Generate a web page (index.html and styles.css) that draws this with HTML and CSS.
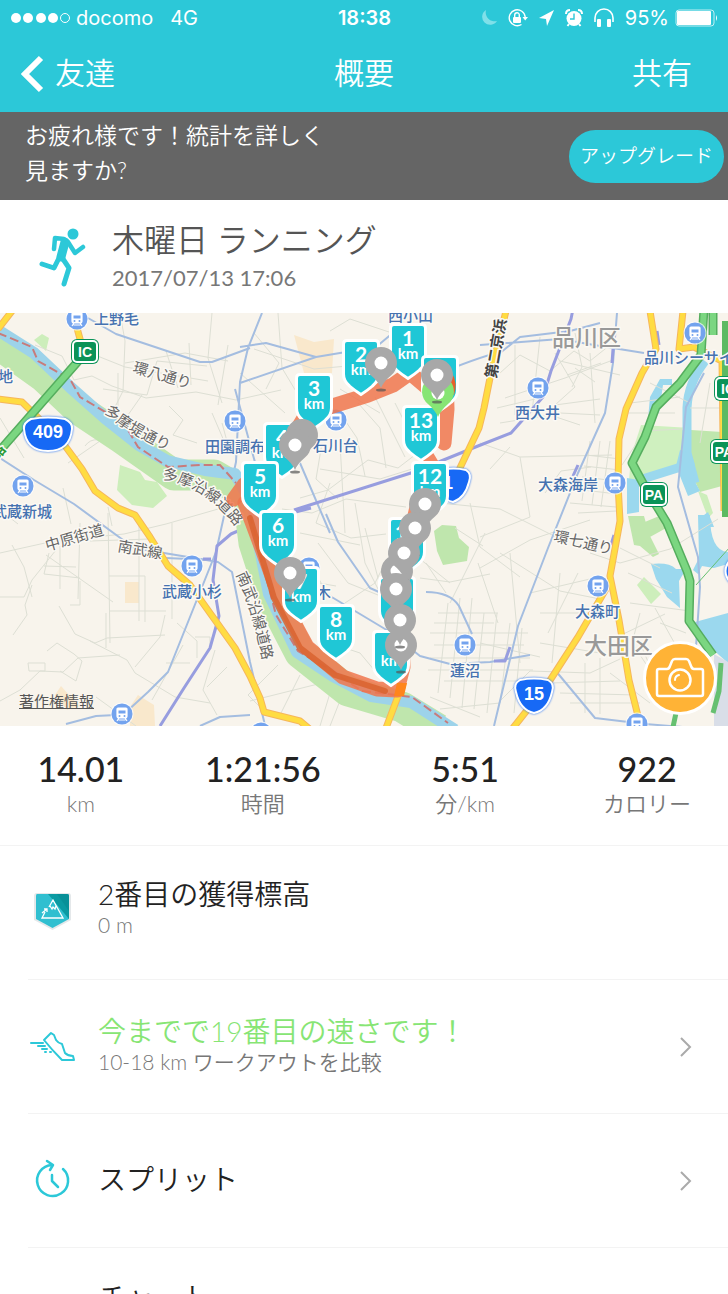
FILE: index.html
```html
<!DOCTYPE html>
<html lang="ja">

<head>
  <meta charset="UTF-8">
  <meta name="viewport" content="width=device-width, initial-scale=1">
  <title>概要 – 木曜日 ランニング</title>
  <link rel="stylesheet" href="styles.css">
</head>

<body>
  <header class="top">
    <div class="status">
      <div class="status-left">
        <svg width="60" height="12" viewBox="0 0 60 12" fill="#fff">
          <circle cx="5" cy="6" r="5" /><circle cx="17" cy="6" r="5" /><circle cx="30" cy="6" r="5" /><circle cx="42" cy="6" r="5" />
          <circle cx="54" cy="6" r="4.5" fill="none" stroke="#fff" />
        </svg>
        <span>docomo</span>
        <span class="network">4G</span>
      </div>
      <div class="clock">18:38</div>
      <div class="status-right">
        <svg width="18" height="20" viewBox="0 0 18 20"><path d="M6 2a8 8 0 1 0 11 11A9 9 0 0 1 6 2z" fill="#80e0e9" /></svg>
        <svg width="20" height="20" viewBox="0 0 20 20" fill="none" stroke="#fff" stroke-width="1.4">
          <path d="M13.500 16.500A8 8 0 1 1 17.200 9" />
          <path d="M14.500 9h5.500l-2.800 3.500z" fill="#fff" stroke="none" />
          <rect x="5" y="9" width="8" height="6" rx="1" fill="#fff" stroke="none" />
          <path d="M6.700 9V7a2.300 2.300 0 0 1 4.600 0v2" />
        </svg>
        <svg width="17" height="20" viewBox="0 0 17 20"><path d="M16 2L1 10l7 1 1 7z" fill="#fff" /></svg>
        <svg width="18" height="20" viewBox="0 0 18 20">
          <circle cx="9" cy="10.500" r="7.500" fill="#fff" />
          <path d="M1 6q0-4 4-4M17 6q0-4-4-4M4 16l-1.500 2M14 16l1.500 2" fill="none" stroke="#fff" stroke-width="2" />
          <path d="M9 5.500v5.500H5" fill="none" stroke="#2cc8d8" stroke-width="1.400" />
        </svg>
        <svg width="22" height="20" viewBox="0 0 22 20">
          <path d="M2 14v-4a9 9 0 0 1 18 0v4" fill="none" stroke="#fff" stroke-width="1.600" />
          <rect x="4" y="11" width="4" height="8" rx="1" fill="#fff" /><rect x="14" y="11" width="4" height="8" rx="1" fill="#fff" />
        </svg>
        <span>95%</span>
        <svg width="43" height="18" viewBox="0 0 43 18">
          <rect x="1" y="1" width="38" height="16" rx="3" fill="none" stroke="#fff" stroke-opacity=".7" />
          <rect x="2" y="2" width="34" height="14" rx="1" fill="#fff" />
          <path d="M41 6q2 3 0 6z" fill="#fff" />
        </svg>
      </div>
    </div>
    <nav class="nav">
      <a class="back" href="#">
        <svg width="24" height="38" viewBox="0 0 24 38"><path d="M20 3L4 19l16 16" fill="none" stroke="#fff" stroke-width="6" /></svg>
        <span>友達</span>
      </a>
      <h1>概要</h1>
      <a class="share" href="#">共有</a>
    </nav>
  </header>

  <main>
    <section class="banner">
      <p>お疲れ様です！統計を詳しく見ますか?</p>
      <button type="button" class="upgrade">アップグレード</button>
    </section>

    <section class="activity">
      <svg class="runner" width="48" height="60" viewBox="0 0 48 60" fill="none" stroke="#2cc8d8" stroke-linecap="round" stroke-linejoin="round">
        <circle cx="34" cy="7" r="5.500" fill="#2cc8d8" stroke="none" />
        <path d="M26 15L22 30" stroke-width="9" />
        <path d="M25 12L16 11l-1 11M29 15l7 11 8-6" stroke-width="4.500" />
        <path d="M20 31l-5 10-12-4M24 32l6 9-5 16" stroke-width="5" />
      </svg>
      <div>
        <h2>木曜日 ランニング</h2>
        <time datetime="2017-07-13T17:06">2017/07/13 17:06</time>
      </div>
    </section>

    <section class="map">
      <svg class="map-canvas" viewBox="0 0 728 413" role="img" aria-label="ランニングコースの地図">
        <defs>
          <g id="station">
            <circle r="11.500" fill="#fff" opacity=".7" />
            <circle r="10.500" fill="#73a3ee" />
            <path d="M-4-6h8q1 0 1 1v7q0 2-2 2h-6q-2 0-2-2v-7q0-1 1-1zM-3 4l-2 3M3 4l2 3M-3.500 6h7" fill="#fff" stroke="#fff" stroke-width="1.200" />
            <path d="M-3.500-3.500h7v3h-7z" fill="#73a3ee" />
            <circle cx="-2.500" cy="2" r="1" fill="#73a3ee" /><circle cx="2.500" cy="2" r="1" fill="#73a3ee" />
          </g>
          <path id="badge" d="M-14 1.500h28q3.500 0 3.500 3.500v30q0 7-6 12Q7 51 0 55.500-7 51-11.500 47q-6-5-6-12V5q0-3.500 3.500-3.500z" fill="#1fc7d6" stroke="#fff" stroke-width="3" />
          <path id="pin-body" d="M0 25Q-3 18-10 12.500A16 16 0 1 1 10 12.500Q3 18 0 25z" fill="#a8a8a8" />
          <g id="pin">
            <ellipse cx="0" cy="27" rx="5" ry="1.500" fill="#555" opacity=".7" />
            <use href="#pin-body" />
            <circle r="6.500" fill="#fff" />
          </g>
          <path id="tamazutsumi" d="M104 99Q128 122 178 142" />
          <path id="tamaensen" d="M162 166Q206 172 239 218" />
          <path id="nanbu" d="M236 262Q252 294 264 354" />
        </defs>

        <rect width="728" height="413" fill="#f8f4ec" />

        <!-- parks and blocks -->
        <path d="M120 152l20 7 5 8 12 2 10 14-14 12-21-3-15-15z" fill="#cdeebb" />
        <path d="M34 27l8-6 7 4-3 13z" fill="#cdeebb" />
        <path d="M434 218l8-6 14 1 3 12 10 9-2 14-24 4-6-14z" fill="#bfe6ad" />
        <path d="M641 112l50 3-8 38-54 15 2-25z" fill="#cff0bf" />
        <path d="M691 117l31 2v54l-22 6-13-28z" fill="#bfe6ad" />
        <path d="M628 203h16l5 18 10 20-6 3-13-11-6-1zM640 211l24-10 4 13-18 10z" fill="#bfe6ad" />
        <path d="M698 178l9 4 6 18-5 5zM637 272l7-8 17 17-10 10z" fill="#cdeebb" />
        <path d="M294 22l20 7 20-3-2 34h-28zM125 269h14v21h-14zM55 382l6-9 18 20-12 4zM130 394l8-12 16 10 1 21h-25z" fill="#f9e8cc" />

        <!-- water -->
        <path d="M705 48Q688 70 687 95v45l8 30M636 168l48-15" class="water" />
        <path d="M660 66l12 0v6l-9 0-4 28-11 6 2-22zM627 165l12 2v32l-12 2zM700 205l8-6 6 15h-11zM680 137q20 5 13 28l7 13-12 5-12-30zM698 202l12 0q0 36 18 37v12l-14 4-12-2-4 8-5-4 6-12zM651 251q18-2 25 5l10 0-7 12 1 27-13-11-11-18zM695 309l33-9v50l-18-16z" fill="#9bd8ee" />
        <path d="M714 341l14 8v64h-14z" fill="#d9dee8" />

        <!-- side streets -->
        <g class="streets">
          <path d="M35 32l27 11 12 24 18-4 20 10 34 12 50-6 40 8 45-10M120 0l5 28-2 50-10 20M95 42l30 12 83 14M103 76l44 6 10-34 50 5M125 50l60-10 43 8M142 82l-14 20 10 18M166 38l12 37M189 30l2 42M212 0l-4 45 14 45M228 32l-10 60M169 93l14 14-10 15 24 8M0 40l25 12 30 40 25 18M50 75l20-5 40 38" />
          <path d="M0 240l54-12 70-7 42-10 80-23M46 242l67 47M12 232l12 22 8 30M0 284h24l8-17 24-30M49 240l-5 21 36 4M44 253l32 1M60 220v56M80 210l-2 76M108 200l2 130M90 228l60-2M139 205v103M109 263h36l0 46M109 298h57M70 292h10v-24M59 293l16 28 20 9 12-5 58-3M106 335V300M32 272l-7 20 2 10-14 20M0 388l20-11 20-19 23 1 15-14 42-3M47 338l10-8 17 11 8 7-6 20-16-10M28 350h17v8H29zM90 328l37 19 8 13 40 24 35 6M165 302l-5 22-25 30M177 310l20 18v17M195 324h15v11M183 332l-31 55M215 337l-12 40 14 25M227 354l-20 20M96 384l40 29" />
          <path d="M166 350h24M172 210v96M118 60v42M85 133q10-14 32 3M108 194l4 19M0 197l18 14M63 175l8 36M68 150l32-22 14 9M0 105l24 40M212 100l12 28M222 110l6 22" />
          <path d="M254 20l25 30-13 26M278 0l4 55 18 30M240 60l45 40M254 36l60 20 90-8M330 18l20-12 60 20M340 100l17 25 8 38M358 90l22 25 6 40M375 84l30 60M322 130l-6 36 22 20M340 130l5 90M300 185l28-8 40-30 30 8 26-20M320 156l60 10 32-10M282 196l30 4 34-14 60 8M330 170l-14 40 35 15 35-4M300 220l60 12M318 230l30 40 40 16M355 190l10 60 30 60M270 245l20 20 46 8M345 290l30-20 12-24M330 330l30 10 25 30M310 250l20 36M380 100l-40-24M395 90l20 40M365 215l14 54M285 115l30 20" />
          <path d="M500 60l20-18 30 16 24-20 16 10 20-16M515 32v70M540 24l-8 76M555 40l20 34-20 18 45-6M575 20l7 34-10 20M500 110l50-8 30 10M505 85l60-20 48-18M480 130l40 14 92-2M520 144l10 60-50 20M497 95l38-9M560 48l60 14M567 62l34-12M575 55l20 14M590 40l5 70M560 100l40 2M545 180l16-22 30-4M490 156l20-22" />
          <path d="M590 128l-8 60M600 128l-8 64M610 128l-9 66M586 142l34 4M584 153l36 4M582 164l36 4M575 176l42 5M570 190l46 4M578 200l38-2M630 90l50-6M625 100l50 0M650 70l40 20M710 70l-10 60M690 95h38M642 122l-20 30M640 118l44-2" />
          <path d="M455 215l28 18M470 190l10 44 40 30M480 255l50-28 60-20M440 190l60 6 60 30M485 220l-35 70M500 240l60 38 40 8M478 250l20 60M510 240l10 110M530 280l60-14M540 300l50 0M560 260l-8 90M480 330l60 14M590 240l30 10 50-14 48-30M620 235l40 20M628 260l44 20M630 290l60 8M640 300l-8 30 20 30M655 295l25 45M615 325l50-24M660 310l26 10M500 388l30-30 60 2 30-14M550 370l70-2M560 380l76 2M585 350v50M600 345v56M570 390l70 0M610 360l40 30M640 330l30 70M648 370l50 24M540 330l60 10M548 320l30-60" />
          <path d="M438 300h60M434 310h60M430 320h98M434 332h90M430 345h100M428 357h105M444 368h80M448 290l-10 90M460 285l-10 100M472 285l-10 110M484 300l-10 96M497 300l-10 100M510 310l-10 80M522 315l-8 85M420 265l30 4 40-8M426 250l20 30M430 384l50 20M440 396l60-6M330 380l-10 33M345 375l-15 38M300 362l-20 40M278 352l-30 30 20 20M250 388l80-20M400 230l50 40" />
        </g>

        <!-- railways -->
        <g class="rail">
          <path d="M88 5l28 16 84 28h12l38-14" />
          <path d="M262 0l-14 35-8 34-4 80-20 90-48 120-20 20-24 22M240 34l26-4 50 14M240 70l76-26 60-10 24-20M0 145l34 22 40 24 60 44 60 10 24 4 14 10 18 90 18 76" />
          <path d="M235 76l30 110M300 150l30 70M326 201l12 28 32 46 40 18M310 273l20 10 60 36 30 24 30 8 40-2 40-7M426 279q24 0 33 14l13 28M166 245l45 2" />
          <path d="M500 40l20-16 50-6 30-8M440 60q50-20 60-20M480 32l80-6M560 26l34 6 50 8M617 0l-4 50-8 50-27 60-30 75-30 78-24 100M555 357l40 48 50 6 50 4M704 60l-18 34-8 80 20 70 2 30-4 60M200 413l20-9 30-2" />
          <path d="M66 411l30-8 20-1" />
        </g>
        <path d="M294 197l120-38 64-26 33-13 32-36 8-26 20-52 4-20M160 413l24-38 26-40 9-32-6-36 4-34 14-12 30-13 50-13M494 348l11 0 5-14M203 246h8M613 36l-1 14M578 152l-5 11M657 18l2 14M614 222l-3 10" class="metro" />

        <!-- river -->
        <path d="M-6 28l50 36 34 32 42 28 54 38 40 0 34 20 6 48 18 56 28 54 48 38 54 16 36 22" fill="none" stroke="#bfe6ad" stroke-width="31" stroke-linejoin="round" />
        <path d="M-4 16l38 24 36 34 35 31 34 27 28 16 38 9 30 4 18 30 6 40 10 50 28 58 36 24 38 20 40 6 44 28" fill="none" stroke="#9dd3ea" stroke-width="12" stroke-linejoin="round" />
        <path d="M-2 20l34 14 6 14 32 18 10 18 44 26 14 24 30 20 32-2 20 0 16 18M250 202l12 46 14 54 22 36 34 20 30 20 50 6 36 26" fill="none" stroke="#c87b7b" stroke-width="2" stroke-dasharray="9 4" />

        <!-- main roads -->
        <g class="road-casing">
          <path d="M12-2L-2 16M77 15l6 22M-2 86l24 3 38 37 22 30 13 22 23 17 17 7 15 22 18 29 22 19 25 35 20 28 15 28 10 22 4 14 36 9 12 10" />
          <path d="M506-2l-14 57-8 40-5 20-20 42-26 34M403 370l-17 45" />
          <path d="M650-2l6 38-14 24-16 36-7 30-1 44 2 38-10 55 9 44 10 60 12 48M606 276l-28 48-31 48-34 43" />
          <path d="M683-2l-4 38 15-2 28 14 2 150" />
        </g>
        <g class="road">
          <path d="M12-2L-2 16M77 15l6 22M-2 86l24 3 38 37 22 30 13 22 23 17 17 7 15 22 18 29 22 19 25 35 20 28 15 28 10 22 4 14 36 9 12 10" />
          <path d="M506-2l-14 57-8 40-5 20-20 42-26 34M403 370l-17 45" />
          <path d="M650-2l6 38-14 24-16 36-7 30-1 44 2 38-10 55 9 44 10 60 12 48M606 276l-28 48-31 48-34 43" />
          <path d="M683-2l-4 38 15-2 28 14 2 150" />
        </g>
        <path d="M80 46L-4 142M704-4l-3 46-21 28-24 24-11 30-13 26 13 24 22 36 20 48 3 10-1 40 24 34M713-2v24" class="highway-casing" />
        <path d="M80 46L-4 142M704-4l-3 46-21 28-24 24-11 30-13 26 13 24 22 36 20 48 3 10-1 40 24 34M713-2v24" class="highway" />
        <path d="M727 8v196" stroke="#5cba63" stroke-width="10" />
        <path d="M721 350l-2 28-6 22M676 400l-3 14" fill="none" stroke="#66c071" stroke-width="5" />
        <path d="M730 234l-34 38" fill="none" stroke="#66c071" stroke-width="1" />

        <!-- stations and area names -->
        <use href="#station" x="77" y="6" /><use href="#station" x="235" y="108" /><use href="#station" x="23" y="173" />
        <use href="#station" x="336" y="107" /><use href="#station" x="538" y="75" /><use href="#station" x="695" y="20" />
        <use href="#station" x="615" y="170" /><use href="#station" x="192" y="253" /><use href="#station" x="309" y="255" />
        <use href="#station" x="598" y="273" /><use href="#station" x="465" y="332" /><use href="#station" x="122" y="401" />
        <use href="#station" x="261" y="420" /><use href="#station" x="637" y="411" />
        <g class="place">
          <text x="94" y="11">上野毛</text>
          <text x="-2" y="69">地</text>
          <text x="205" y="139">田園調布</text>
          <text x="-8" y="204">武蔵新城</text>
          <text x="162" y="284">武蔵小杉</text>
          <text x="388" y="8">西小山</text>
          <text x="313" y="138">石川台</text>
          <text x="316" y="285">木</text>
          <text x="515" y="105">西大井</text>
          <text x="644" y="50">品川シーサイ</text>
          <text x="538" y="177">大森海岸</text>
          <text x="575" y="304">大森町</text>
          <text x="450" y="363">蓮沼</text>
        </g>
        <g class="area">
          <text x="552" y="33">品川区</text>
          <text x="584" y="341">大田区</text>
        </g>
        <g class="street-name">
          <text transform="translate(132 59) rotate(16)">環八通り</text>
          <text transform="translate(47 238) rotate(-16)">中原街道</text>
          <text transform="translate(117 238) rotate(10)">南武線</text>
          <text transform="translate(553 228) rotate(13)">環七通り</text>
          <text transform="translate(496 66) rotate(-80)" class="dark">第二京浜</text>
          <text transform="translate(-12 160) rotate(-52)" class="green">道路</text>
          <text><textPath href="#tamazutsumi">多摩堤通り</textPath></text>
          <text><textPath href="#tamaensen">多摩沿線道路</textPath></text>
          <text><textPath href="#nanbu">南武沿線道路</textPath></text>
        </g>

        <!-- road signs -->
        <g class="sign">
          <rect class="rim" x="71" y="26" width="28" height="25" rx="6" /><rect x="73" y="28" width="24" height="21" rx="4" /><text x="85" y="44">IC</text>
          <rect class="rim" x="640" y="169" width="28" height="25" rx="6" /><rect x="642" y="171" width="24" height="21" rx="4" /><text x="654" y="187">PA</text>
          <rect class="rim" x="710" y="126" width="28" height="25" rx="6" /><rect x="712" y="128" width="24" height="21" rx="4" /><text x="724" y="144">PA</text>
          <rect class="rim" x="714" y="63" width="28" height="25" rx="6" /><rect x="716" y="65" width="24" height="21" rx="4" /><text x="728" y="81">IC</text>
        </g>
        <g class="route">
          <path d="M31 106q17-3 34 0 8 4 7 10-2 22-24 22T24 116q-1-6 7-10z" /><text x="48" y="125">409</text>
          <path d="M520 367q14-3 28 0 7 4 4 12-4 18-18 21-14-3-18-21-3-8 4-12z" /><text x="534" y="387">15</text>
          <path d="M440 157q14-3 26 0 6 4 3 12-4 16-16 20-14-3-16-20-2-8 3-12z" /><text x="448" y="176">1</text>
          <path d="M732 245q-12 12-2 24h12v-24z" />
        </g>

        <!-- the run -->
        <path d="M446 66l1 30-3 34M440 66l-4 16-26-22-17 12-25 10-42 13-22 10-18 30-20 22-22 15-10 14" class="track" />
        <path d="M245 190l12 32 22 60 28 52 36 30 34 12 20 1 6-23-2-40 2-60 14-60 22-30-12-20" class="track" />
        <path d="M250 205l24 80 26 50 35 27 50 16" class="track-repeat" />
        <path d="M397 370h10l-3 13h-10z" fill="#ff851b" />

        <!-- kilometre badges -->
        <g class="badges">
          <g transform="translate(408 10)"><use href="#badge" /><text y="23">1</text><text y="36" class="unit">km</text></g>
          <g transform="translate(361 26)"><use href="#badge" /><text y="23">2</text><text y="36" class="unit">km</text></g>
          <g transform="translate(314 60)"><use href="#badge" /><text y="23">3</text><text y="36" class="unit">km</text></g>
          <g transform="translate(282 109)"><use href="#badge" /><text y="23">4</text><text y="36" class="unit">km</text></g>
          <g transform="translate(260 148)"><use href="#badge" /><text y="23">5</text><text y="36" class="unit">km</text></g>
          <g transform="translate(278 197)"><use href="#badge" /><text y="23">6</text><text y="36" class="unit">km</text></g>
          <g transform="translate(301 253)"><use href="#badge" /><text y="23">7</text><text y="36" class="unit">km</text></g>
          <g transform="translate(336 291)"><use href="#badge" /><text y="23">8</text><text y="36" class="unit">km</text></g>
          <g transform="translate(391 317)"><use href="#badge" /><text y="23">9</text><text y="36" class="unit">km</text></g>
          <g transform="translate(440 42)"><use href="#badge" /></g>
          <g transform="translate(421 92)"><use href="#badge" /><text y="23">13</text><text y="36" class="unit">km</text></g>
          <g transform="translate(397 263)"><use href="#badge" /></g>
          <g transform="translate(407 204)"><use href="#badge" /><text y="23">11</text></g>
          <g transform="translate(430 148)"><use href="#badge" /><text y="23">12</text><text y="36" class="unit">km</text></g>
        </g>

        <!-- photo and start pins -->
        <path d="M452 60q6 10 2 22l-8-4z" fill="#e8602c" />
        <path d="M438 104Q435 97 428 91A16 16 0 1 1 448 91Q441 97 438 104z" fill="#87e574" />
        <circle cx="438" cy="80" r="6.500" fill="#fff" />
        <use href="#pin" x="437" y="62" />
        <use href="#pin" x="381" y="50" />
        <use href="#pin-body" x="302" y="122" /><use href="#pin" x="295" y="132" />
        <use href="#pin" x="290" y="260" />
        <use href="#pin" x="425" y="191" /><use href="#pin" x="415" y="215" />
        <use href="#pin" x="397" y="258" /><use href="#pin" x="404" y="240" />
        <use href="#pin" x="401" y="332" />
        <use href="#pin" x="396" y="276" /><use href="#pin" x="400" y="307" />
      </svg>
      <a class="legal" href="#">著作権情報</a>
      <button type="button" class="camera" aria-label="写真を追加">
        <svg width="50" height="42" viewBox="0 0 50 42" fill="none" stroke="#fff" stroke-width="2.500" stroke-linejoin="round" stroke-linecap="round">
          <path d="M4 12h8q2 0 3-3l2-5q1-2 3-2h11q2 0 3 2l2 5q1 3 3 3h7q2 0 2 2v23q0 2-2 2H4q-2 0-2-2V14q0-2 2-2z" />
          <circle cx="25" cy="23" r="10.500" />
          <path d="M20 23q0-4 4-5" stroke-width="2" />
        </svg>
      </button>
    </section>

    <section class="stats">
      <div class="stat"><strong>14.01</strong><span>km</span></div>
      <div class="stat"><strong>1:21:56</strong><span>時間</span></div>
      <div class="stat"><strong>5:51</strong><span>分/km</span></div>
      <div class="stat"><strong>922</strong><span>カロリー</span></div>
    </section>

    <section class="rows">
      <div class="row record">
        <svg class="row-icon" width="48" height="48" viewBox="0 0 48 48">
          <path d="M9 7h31q3 0 3 3v24L24.500 44 6 34V10q0-3 3-3z" fill="#e4e8ea" />
          <path d="M9 8h30q2 0 2 2v23l-16.500 9L8 33V10q0-2 1-2z" fill="#30bfd0" />
          <path d="M20 8h19q2 0 2 2v23z" fill="#0b9aa2" />
          <path d="M29 8h10q2 0 2 2v15z" fill="#078a91" opacity=".6" />
          <path d="M17 26l-3 6h21L25 14l-4 7M22 20l2 3 1-2 2 2 1-3M14 27l5-4M16 23h3v3" fill="none" stroke="#fff" stroke-width="1.300" />
        </svg>
        <div class="row-text"><h3>2番目の獲得標高</h3><p>0 m</p></div>
      </div>
      <a class="row" href="#">
        <svg class="row-icon" width="48" height="48" viewBox="0 0 48 48" fill="none" stroke="#2cc8d8" stroke-width="2" stroke-linecap="round" stroke-linejoin="round">
          <path d="M16 17l7-7 3 2 2 5q2 3 6 4l3 9q3 3 8 3l1 4H34Q24 27 16 17zM3 20h12M10 23h7M14 26h5M17 29h1M22 29h1" />
        </svg>
        <div class="row-text"><h3 class="good">今までで19番目の速さです！</h3><p>10-18 km ワークアウトを比較</p></div>
        <svg class="chevron" width="14" height="22" viewBox="0 0 14 22"><path d="M2 2l9 9-9 9" /></svg>
      </a>
      <a class="row" href="#">
        <svg class="row-icon" width="48" height="48" viewBox="0 0 48 48" fill="none" stroke="#2cc8d8" stroke-width="2.500" stroke-linecap="round" stroke-linejoin="round">
          <path d="M35 12A15.500 15.500 0 1 1 24 8M19 4l6 4-3 5M24 18v6l6 6" />
        </svg>
        <div class="row-text"><h3>スプリット</h3></div>
        <svg class="chevron" width="14" height="22" viewBox="0 0 14 22"><path d="M2 2l9 9-9 9" /></svg>
      </a>
      <a class="row chart" href="#">
        <span class="row-icon"></span>
        <div class="row-text"><h3>チャート</h3></div>
      </a>
    </section>
  </main>
</body>

</html>
```
FILE: styles.css
```css
:root {
  --teal: #2cc8d8;
  --green: #87e574;
  --orange: #ffb336;
  --line: #f3f3f3;
}

* {
  box-sizing: border-box;
}

body {
  margin: 0;
  height: 100vh;
  display: flex;
  flex-direction: column;
  font-family: Lato, 'Noto Sans CJK JP', sans-serif;
  font-weight: 350;
  color: #222;
  background-color: #fff;
}

h1,
h2,
h3,
p {
  margin: 0;
  font-weight: 350;
}

a {
  color: inherit;
  text-decoration: none;
}

button {
  border: none;
  padding: 0;
  font: inherit;
  color: #fff;
  cursor: pointer;
}

svg {
  display: block;
  flex: none;
}

/* header */
.top {
  flex: none;
  background-color: var(--teal);
  color: #fff;
}

.status {
  display: grid;
  grid-template-columns: 1fr auto 1fr;
  align-items: center;
  height: 36px;
  padding: 0 10px 0 11px;
  font-family: Inter, sans-serif;
  font-size: 20px;
  font-weight: 400;
}

.status-left,
.status-right {
  display: flex;
  align-items: center;
  gap: 5px;
}

.status-right {
  justify-content: flex-end;
  gap: 10px;
}

.status-right span {
  margin-right: -4px;
}

.network {
  margin-left: 12px;
}

.clock {
  font-weight: 600;
}

.nav {
  display: grid;
  grid-template-columns: 1fr auto 1fr;
  align-items: center;
  height: 76px;
  padding: 0 21px;
  font-size: 30px;
  line-height: 40px;
}

.nav h1,
.nav span,
.share {
  padding-bottom: 5px;
  font-size: 30px;
}

.back {
  display: flex;
  align-items: center;
  gap: 10px;
}

.share {
  padding-right: 15px;
  text-align: right;
}

/* scrolling part below the header */
main {
  flex: 1;
  min-height: 0;
  overflow-y: auto;
  scrollbar-width: none;
}

.banner {
  display: flex;
  justify-content: space-between;
  align-items: center;
  height: 88px;
  padding: 0 4px 0 25px;
  background-color: #656565;
  color: #fff;
}

.banner p {
  max-width: 312px;
  font-size: 23px;
  line-height: 35px;
  padding-bottom: 6px;
}

.upgrade {
  width: 155px;
  height: 53px;
  border-radius: 27px;
  padding-bottom: 4px;
  background-color: var(--teal);
  font-size: 19px;
}

.activity {
  display: flex;
  align-items: center;
  gap: 25px;
  height: 113px;
  padding-left: 39px;
}

.activity h2 {
  font-size: 32px;
  line-height: 42px;
  color: #555;
}

.activity time {
  display: block;
  font-size: 22px;
  font-weight: 400;
  line-height: 34px;
  color: #777;
}

/* map */
.map {
  position: relative;
}

.map-canvas {
  width: 100%;
  height: auto;
}

.map text {
  font-family: 'Noto Sans CJK JP', sans-serif;
}

.streets,
.rail,
.metro,
.water,
.road-casing,
.road,
.highway,
.highway-casing {
  fill: none;
  stroke-linejoin: round;
}

.streets {
  stroke: #dddfd4;
  stroke-width: 1;
}

.rail {
  stroke: #a4bde0;
  stroke-width: 2;
}

.metro {
  stroke: #979ddf;
  stroke-width: 3;
}

.water {
  stroke: #9bd8ee;
  stroke-width: 9;
}

.road-casing {
  stroke: #f6b65c;
  stroke-width: 7;
}

.road {
  stroke: #ffdc42;
  stroke-width: 5;
}

.highway-casing {
  stroke: #55ad5e;
  stroke-width: 9;
}

.highway {
  stroke: #7bd681;
  stroke-width: 6;
}

.place,
.area,
.street-name {
  stroke: #fbf9f4;
  stroke-width: 3;
  stroke-linejoin: round;
  paint-order: stroke;
}

.place {
  font-size: 15px;
  font-weight: 500;
  fill: #4672b0;
}

.area {
  font-size: 23px;
  font-weight: 500;
  fill: #999;
}

.street-name {
  font-size: 15px;
  font-weight: 400;
  fill: #666;
}

.street-name .dark {
  font-weight: 700;
  fill: #444;
}

.street-name .green {
  font-weight: 700;
  fill: #2a9a35;
}

.sign rect {
  fill: #0a9358;
  stroke: #fff;
  stroke-width: 2;
}

.sign .rim {
  stroke: none;
}

.map .sign text,
.map .route text {
  font-family: 'Liberation Sans', sans-serif;
  font-weight: 700;
  text-anchor: middle;
  fill: #fff;
}

.sign text {
  font-size: 14px;
}

.route text {
  font-size: 18px;
}

.route path {
  fill: #1769f5;
  stroke: #fff;
  stroke-width: 2;
  filter: drop-shadow(0 0 1px #1769f5);
}

.track,
.track-repeat {
  fill: none;
  stroke: #f0764e;
  stroke-opacity: .85;
  stroke-width: 15;
  stroke-linejoin: round;
  stroke-linecap: round;
}

.track-repeat {
  stroke: #d9632f;
  stroke-width: 6;
}

.map .badges text {
  font-family: Lato, sans-serif;
  font-size: 21px;
  font-weight: 700;
  text-anchor: middle;
  fill: #fff;
}

.map .badges .unit {
  font-size: 15px;
}

.legal {
  position: absolute;
  left: 19px;
  bottom: 14px;
  font-size: 15px;
  line-height: 22px;
  font-weight: 400;
  color: #555;
  text-decoration: underline;
}

.camera {
  position: absolute;
  right: 11px;
  bottom: 11px;
  display: flex;
  justify-content: center;
  align-items: center;
  width: 74px;
  height: 74px;
  border: 3px solid #fff;
  border-radius: 50%;
  background-color: var(--orange);
}

/* totals */
.stats {
  display: grid;
  grid-template-columns: 4fr 5fr 5fr 4fr;
  align-items: center;
  height: 120px;
  border-bottom: 1px solid var(--line);
  text-align: center;
}

.stat strong,
.stat span {
  display: block;
}

.stat strong {
  font-size: 34px;
  font-weight: 500;
  line-height: 36px;
}

.stat span {
  font-size: 22px;
  line-height: 34px;
  color: #777;
}

/* list */
.row {
  display: flex;
  align-items: center;
  height: 134px;
  margin-left: 28px;
  padding-right: 35px;
  border-bottom: 1px solid var(--line);
}

.row-icon {
  width: 48px;
}

.row-text {
  flex: 1;
  margin-left: 22px;
  padding-bottom: 4px;
}

.row h3 {
  font-size: 28px;
  line-height: 34px;
}

.row p {
  font-size: 21px;
  line-height: 28px;
  color: #777;
}

.row .good {
  color: var(--green);
}

.record {
  padding-bottom: 5px;
}

.chart {
  align-items: flex-start;
  padding-top: 32px;
}

.chevron path {
  fill: none;
  stroke: #aaa;
  stroke-width: 2;
}
```
